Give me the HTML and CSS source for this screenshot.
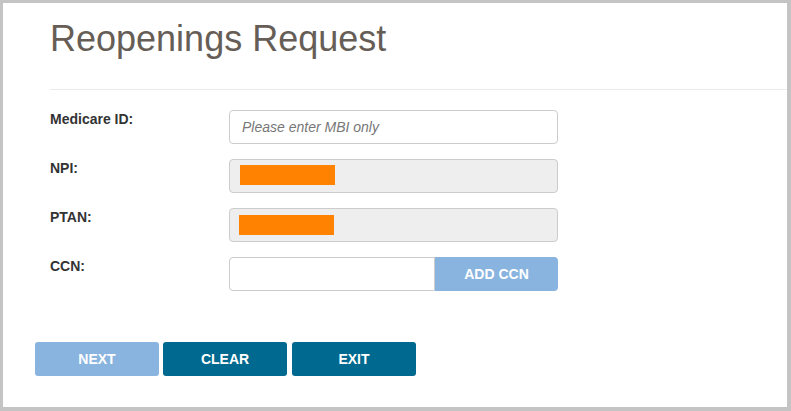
FILE: index.html
```html
<!DOCTYPE html>
<html>
<head>
<meta charset="utf-8">
<link rel="stylesheet" href="styles.css">
</head>
<body>
<div class="frame">
  <h1 class="title">Reopenings Request</h1>
  <div class="rule"></div>
  <form class="form">
    <div class="row">
      <label class="label">Medicare ID:</label>
      <input class="field" type="text" placeholder="Please enter MBI only">
    </div>
    <div class="row">
      <label class="label">NPI:</label>
      <div class="field disabled"><span class="redact"></span></div>
    </div>
    <div class="row">
      <label class="label">PTAN:</label>
      <div class="field disabled"><span class="redact redact-b"></span></div>
    </div>
    <div class="row">
      <label class="label">CCN:</label>
      <div class="group">
        <input class="field group-input" type="text">
        <button type="button" class="btn btn-light group-btn">ADD CCN</button>
      </div>
    </div>
  </form>
  <div class="actions">
    <button type="button" class="btn btn-light act">NEXT</button>
    <button type="button" class="btn btn-dark act">CLEAR</button>
    <button type="button" class="btn btn-dark act act-exit">EXIT</button>
  </div>
</div>
</body>
</html>
```

FILE: styles.css
```css
* { box-sizing: border-box; }
html, body { margin: 0; padding: 0; background: #fff; }
body { font-family: "Liberation Sans", Arial, sans-serif; color: #333; }

.frame {
  width: 791px;
  height: 411px;
  border-style: solid;
  border-color: #c4c4c4;
  border-width: 3px 4px 4px 3px;
  background: #fff;
  overflow: hidden;
}

.title {
  margin: 0;
  padding: 16px 0 0 47px;
  font-size: 36px;
  line-height: 40px;
  font-weight: normal;
  color: #665e56;
}

.rule {
  margin: 30px 0 0 47px;
  height: 1px;
  background: #ebebeb;
}

.form {
  margin: 20px 0 0 47px;
}

.row {
  display: flex;
  align-items: flex-start;
  margin-bottom: 15px;
}

.label {
  width: 179px;
  font-size: 14px;
  line-height: 16px;
  font-weight: bold;
  color: #333;
  padding-top: 1px;
}

.field {
  width: 329px;
  height: 34px;
  border: 1px solid #ccc;
  border-radius: 4px;
  background: #fff;
  font-family: "Liberation Sans", Arial, sans-serif;
  font-size: 14px;
  padding: 0 12px;
  margin: 0;
}
.field::placeholder { color: #777; font-style: italic; }

.disabled {
  background: #eee;
  padding: 5px 0 0 10px;
}
.redact {
  display: block;
  width: 95px;
  height: 20px;
  background: #ff8200;
}
.redact-b { margin-left: -1px; margin-top: 1px; }

.group { display: flex; width: 329px; }
.group-input {
  width: 206px;
  border-radius: 4px 0 0 4px;
}
.group-btn {
  width: 123px;
  height: 34px;
  border-radius: 0 4px 4px 0;
}

.btn {
  border: 0;
  margin: 0;
  font-family: "Liberation Sans", Arial, sans-serif;
  font-weight: bold;
  font-size: 14px;
  color: #fff;
  padding: 0;
  cursor: pointer;
}
.btn-light { background: #89b4df; }
.btn-dark { background: #00698f; }

.actions {
  display: flex;
  gap: 4px;
  margin: 51px 0 0 32px;
}
.act {
  width: 124px;
  height: 34px;
  border-radius: 3px;
}
.act-exit { margin-left: 1px; }
```
